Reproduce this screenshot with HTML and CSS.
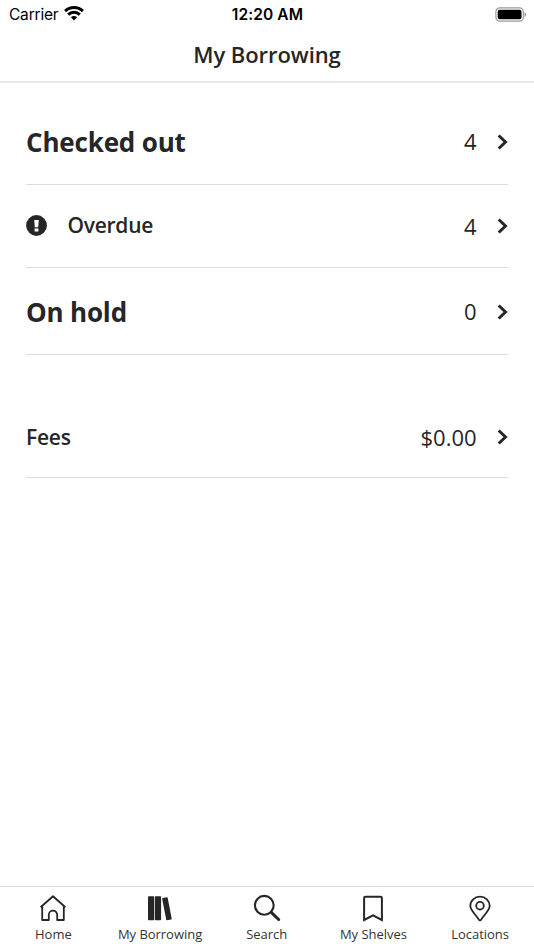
FILE: index.html
```html
<!DOCTYPE html>
<html lang="en">
<head>
<meta charset="utf-8">
<title>My Borrowing</title>
<link rel="stylesheet" href="styles.css">
</head>
<body>
<header class="header">
  <div class="status">
    <div class="carrier"><span class="carrier-name">Carrier</span>
      <svg class="wifi" width="20" height="15" viewBox="0 0 20 15"><g fill="none" stroke="#000" stroke-width="2.9"><path d="M1.1 5.1a12.7 12.7 0 0 1 17.8 0"/><path d="M4.2 8.6a8.2 8.2 0 0 1 11.6 0"/></g><path d="M6.9 11.3a4.6 4.6 0 0 1 6.2 0L10 14.5z"/></svg>
    </div>
    <div class="clock">12:20 AM</div>
    <div class="power">
      <svg width="31" height="15" viewBox="0 0 31 15"><rect x=".9" y=".9" width="27.4" height="13.2" rx="3.8" fill="#fff" stroke="#999" stroke-width="1.2"/><rect x="2.7" y="2.7" width="23.8" height="9.6" rx="2"/><path d="M29.6 5v5q1.3-.7 1.3-2.5T29.6 5z" fill="#888"/></svg>
    </div>
  </div>
  <h1 class="title">My Borrowing</h1>
</header>
<main class="list">
  <a class="row row-first"><span class="heading">Checked out</span><span class="value">4</span><svg class="chevron" width="11" height="16" viewBox="0 0 11 16"><path d="M1.7 1.5 8.5 8l-6.8 6.5"/></svg></a>
  <a class="row row-overdue"><svg class="alert" width="21" height="21" viewBox="0 0 21 21"><circle cx="10.5" cy="10.5" r="10.4" fill="#262626"/><path d="M8.2 4.9h4.6l-.6 7.4H8.8zM8.6 13.4h3.8v3H8.6z" fill="#fff"/></svg><span class="label">Overdue</span><span class="value">4</span><svg class="chevron" width="11" height="16" viewBox="0 0 11 16"><path d="M1.7 1.5 8.5 8l-6.8 6.5"/></svg></a>
  <a class="row row-hold"><span class="heading">On hold</span><span class="value">0</span><svg class="chevron" width="11" height="16" viewBox="0 0 11 16"><path d="M1.7 1.5 8.5 8l-6.8 6.5"/></svg></a>
  <a class="row row-fees"><span class="label">Fees</span><span class="value">$0.00</span><svg class="chevron" width="11" height="16" viewBox="0 0 11 16"><path d="M1.7 1.5 8.5 8l-6.8 6.5"/></svg></a>
</main>
<nav class="tabs">
  <a class="tab"><svg class="icon" width="28" height="28" viewBox="0 0 28 28"><path d="M1.6 13.2 14 2.3l12.4 10.9M3.2 12v14h6.6v-5.2a4.2 4.2 0 0 1 8.4 0V26h6.6V12" fill="none" stroke="#262626" stroke-width="1.8" stroke-linejoin="round"/></svg><span>Home</span></a>
  <a class="tab"><svg class="icon" width="28" height="28" viewBox="0 0 28 28"><g fill="#262626"><rect x="2" y="2.3" width="6.2" height="24" rx=".7"/><rect x="8.9" y="2.3" width="6.2" height="24" rx=".7"/><path d="M16.8 4.1 20.9 3.3q.7-.1.8.6l4 20.8q.1.7-.6.8l-4.1.7q-.7.1-.8-.6L16.2 4.9q-.1-.7.6-.8z"/></g></svg><span>My Borrowing</span></a>
  <a class="tab"><svg class="icon" width="28" height="28" viewBox="0 0 28 28"><g fill="none" stroke="#262626"><circle cx="11.3" cy="11.3" r="9.4" stroke-width="2.1"/><path d="m18.5 18.6 7.2 6.9" stroke-width="3" stroke-linecap="round"/></g></svg><span>Search</span></a>
  <a class="tab"><svg class="icon" width="28" height="28" viewBox="0 0 28 28"><path d="M5.1 4.2q0-1.4 1.4-1.4h15q1.4 0 1.4 1.4V26L14 21.3 5.1 26z" fill="none" stroke="#262626" stroke-width="2"/></svg><span>My Shelves</span></a>
  <a class="tab"><svg class="icon" width="28" height="28" viewBox="0 0 28 28"><g fill="none" stroke="#262626" stroke-width="1.8"><path d="M14 26.4q-.6 0-1.2-.9C9 20 4.3 15.9 4.3 12a9.7 9.4 0 0 1 19.4 0c0 3.9-4.7 8-8.5 13.5q-.6.9-1.2.9z" stroke-linejoin="round"/><circle cx="14" cy="11.7" r="3.8"/></g></svg><span>Locations</span></a>
</nav>
</body>
</html>
```
FILE: styles.css
```css
* { box-sizing: border-box; }
body {
  margin: 0;
  height: 950px;
  display: flex;
  flex-direction: column;
  background: #fff;
  color: #262626;
  font-family: "Open Sans", sans-serif;
  overflow: hidden;
}
svg { display: block; flex: none; }
.header { height: 83px; padding-top: 4px; border-bottom: 2px solid #e8e8e8; }
.status {
  height: 20px;
  display: grid;
  grid-template-columns: 1fr auto 1fr;
  align-items: center;
  padding: 0 8px 0 9px;
  color: #000;
  font: 15.5px/20px Inter, sans-serif;
}
.carrier { display: flex; align-items: center; gap: 6px; }
.carrier-name { letter-spacing: -.2px; margin-top: 1px; }
.wifi { margin-top: -2px; }
.clock { font-weight: 600; letter-spacing: .1px; margin-top: 1px; }
.power { display: flex; justify-content: flex-end; margin-top: -1px; }
.title { margin: 14px 0 0; font-size: 22px; line-height: 32px; font-weight: 600; text-align: center; letter-spacing: -.07px; }
.list { flex: 1; padding: 0 26px; }
.row { display: flex; align-items: center; border-bottom: 1px solid #ddd; }
.row-first { height: 102px; padding-top: 17px; }
.row-overdue { height: 83px; }
.row-hold { height: 87px; padding-top: 2px; }
.row-fees { height: 123px; padding-top: 43px; }
.heading { font-size: 26px; line-height: 36px; font-weight: 700; letter-spacing: -.17px; }
.label { font-size: 21px; line-height: 30px; font-weight: 600; letter-spacing: -.24px; margin-bottom: 2px; }
.alert { margin: 0 20.4px 2px 0; }
.value { margin: 0 0 2px auto; font-size: 22px; line-height: 30px; }
.row-overdue .value { margin-bottom: 1px; }
.chevron { margin-left: 20.4px; }
.row-fees .chevron { margin-bottom: 1px; }
.chevron path { fill: none; stroke: #262626; stroke-width: 3; }
.tabs { height: 64px; display: grid; grid-template-columns: repeat(5, 106.7px); border-top: 1px solid #ddd; }
.tab { display: flex; flex-direction: column; align-items: center; padding-top: 7px; font-size: 13px; line-height: 18px; letter-spacing: -.03px; white-space: nowrap; color: #333; }
.tab span { margin-top: 3px; }
```
